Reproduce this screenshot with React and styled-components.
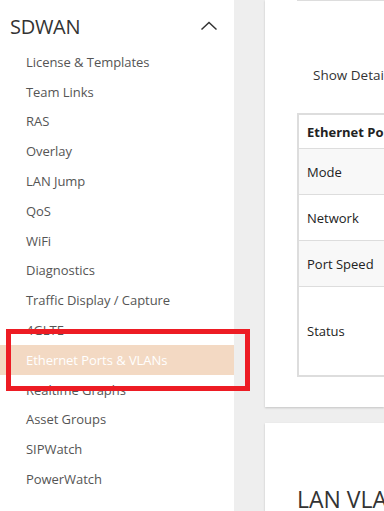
import React from "react";
import styled, { createGlobalStyle } from "styled-components";

const Global = createGlobalStyle`
  html, body { margin: 0; padding: 0; background: #eeeeee; overflow: hidden; }
  body { font-family: "Open Sans", "Noto Sans", sans-serif; }
`;

const Page = styled.div`
  display: flex;
  width: 384px;
  height: 511px;
  overflow: hidden;
  background: #eeeeee;
`;

const Sidebar = styled.nav`
  position: relative;
  flex: 0 0 234px;
  background: #ffffff;
  height: 511px;
`;

const SectionHeader = styled.div`
  display: flex;
  align-items: center;
  justify-content: space-between;
  height: 47px;
  padding: 5px 16px 0 10px;
  box-sizing: border-box;
`;

const SectionTitle = styled.span`
  font-size: 20px;
  color: #333333;
  letter-spacing: -0.3px;
`;

const MenuList = styled.ul`
  list-style: none;
  margin: 0;
  padding: 0;
`;

const MenuItem = styled.li`
  display: flex;
  align-items: center;
  height: 29.8px;
  padding-left: 26px;
  font-size: 13px;
  letter-spacing: -0.05px;
  color: ${(p) => (p.$active ? "#ffffff" : "#555555")};
  background: ${(p) => (p.$active ? "#f3d9c3" : "transparent")};
`;

const Highlight = styled.div`
  position: absolute;
  left: 6px;
  top: 329px;
  width: 244px;
  height: 62px;
  box-sizing: border-box;
  border: 5px solid #ed1c24;
  z-index: 5;
`;

const Main = styled.main`
  flex: 1;
  display: flex;
  flex-direction: column;
  gap: 16px;
  padding-left: 31px;
  min-width: 0;
`;

const Card = styled.section`
  background: #ffffff;
  box-shadow: 0 1px 2px rgba(0, 0, 0, 0.18);
  padding-left: 32px;
  height: ${(p) => p.$h}px;
  overflow: hidden;
  flex-shrink: 0;
`;

const PrevBorder = styled.div`
  height: 1px;
  background: #dddddd;
`;

const ShowDetails = styled.div`
  margin-top: 64px;
  padding-left: 16px;
  font-size: 13.5px;
  color: #333333;
  white-space: nowrap;
  height: 20px;
  line-height: 20px;
`;

const Table = styled.div`
  margin-top: 28px;
  width: 200px;
  border: 2px solid #dddddd;
`;

const Row = styled.div`
  display: flex;
  align-items: center;
  height: ${(p) => p.$h}px;
  padding-left: 8px;
  font-size: 13px;
  color: #222222;
  white-space: nowrap;
  background: ${(p) => (p.$shade ? "#f8f8f8" : "#ffffff")};
  border-top: ${(p) => (p.$first ? "none" : "1.5px solid #dddddd")};
  font-weight: ${(p) => (p.$head ? 700 : 400)};
`;

const Heading = styled.h2`
  margin: 60px 0 0;
  font-weight: 400;
  font-size: 23px;
  color: #333333;
  white-space: nowrap;
`;

const items = [
  "License & Templates",
  "Team Links",
  "RAS",
  "Overlay",
  "LAN Jump",
  "QoS",
  "WiFi",
  "Diagnostics",
  "Traffic Display / Capture",
  "4GLTE",
  "Ethernet Ports & VLANs",
  "Realtime Graphs",
  "Asset Groups",
  "SIPWatch",
  "PowerWatch",
];

const Chevron = () => (
  <svg width="18" height="10" viewBox="0 0 18 10">
    <polyline points="1.5,8.5 9,1.5 16.5,8.5" fill="none" stroke="#333" strokeWidth="1.5" />
  </svg>
);

export default function App() {
  return (
    <>
      <Global />
      <Page>
        <Sidebar>
          <SectionHeader>
            <SectionTitle>SDWAN</SectionTitle>
            <Chevron />
          </SectionHeader>
          <MenuList>
            {items.map((t, i) => (
              <MenuItem key={t} $active={i === 10}>
                {t}
              </MenuItem>
            ))}
          </MenuList>
          <Highlight />
        </Sidebar>
        <Main>
          <Card $h={407}>
            <PrevBorder />
            <ShowDetails>Show Details</ShowDetails>
            <Table>
              <Row $h={33} $head $first>Ethernet Ports</Row>
              <Row $h={45} $shade>Mode</Row>
              <Row $h={45}>Network</Row>
              <Row $h={45} $shade>Port Speed</Row>
              <Row $h={88}>Status</Row>
            </Table>
          </Card>
          <Card $h={120}>
            <Heading>LAN VLANs</Heading>
          </Card>
        </Main>
      </Page>
    </>
  );
}
